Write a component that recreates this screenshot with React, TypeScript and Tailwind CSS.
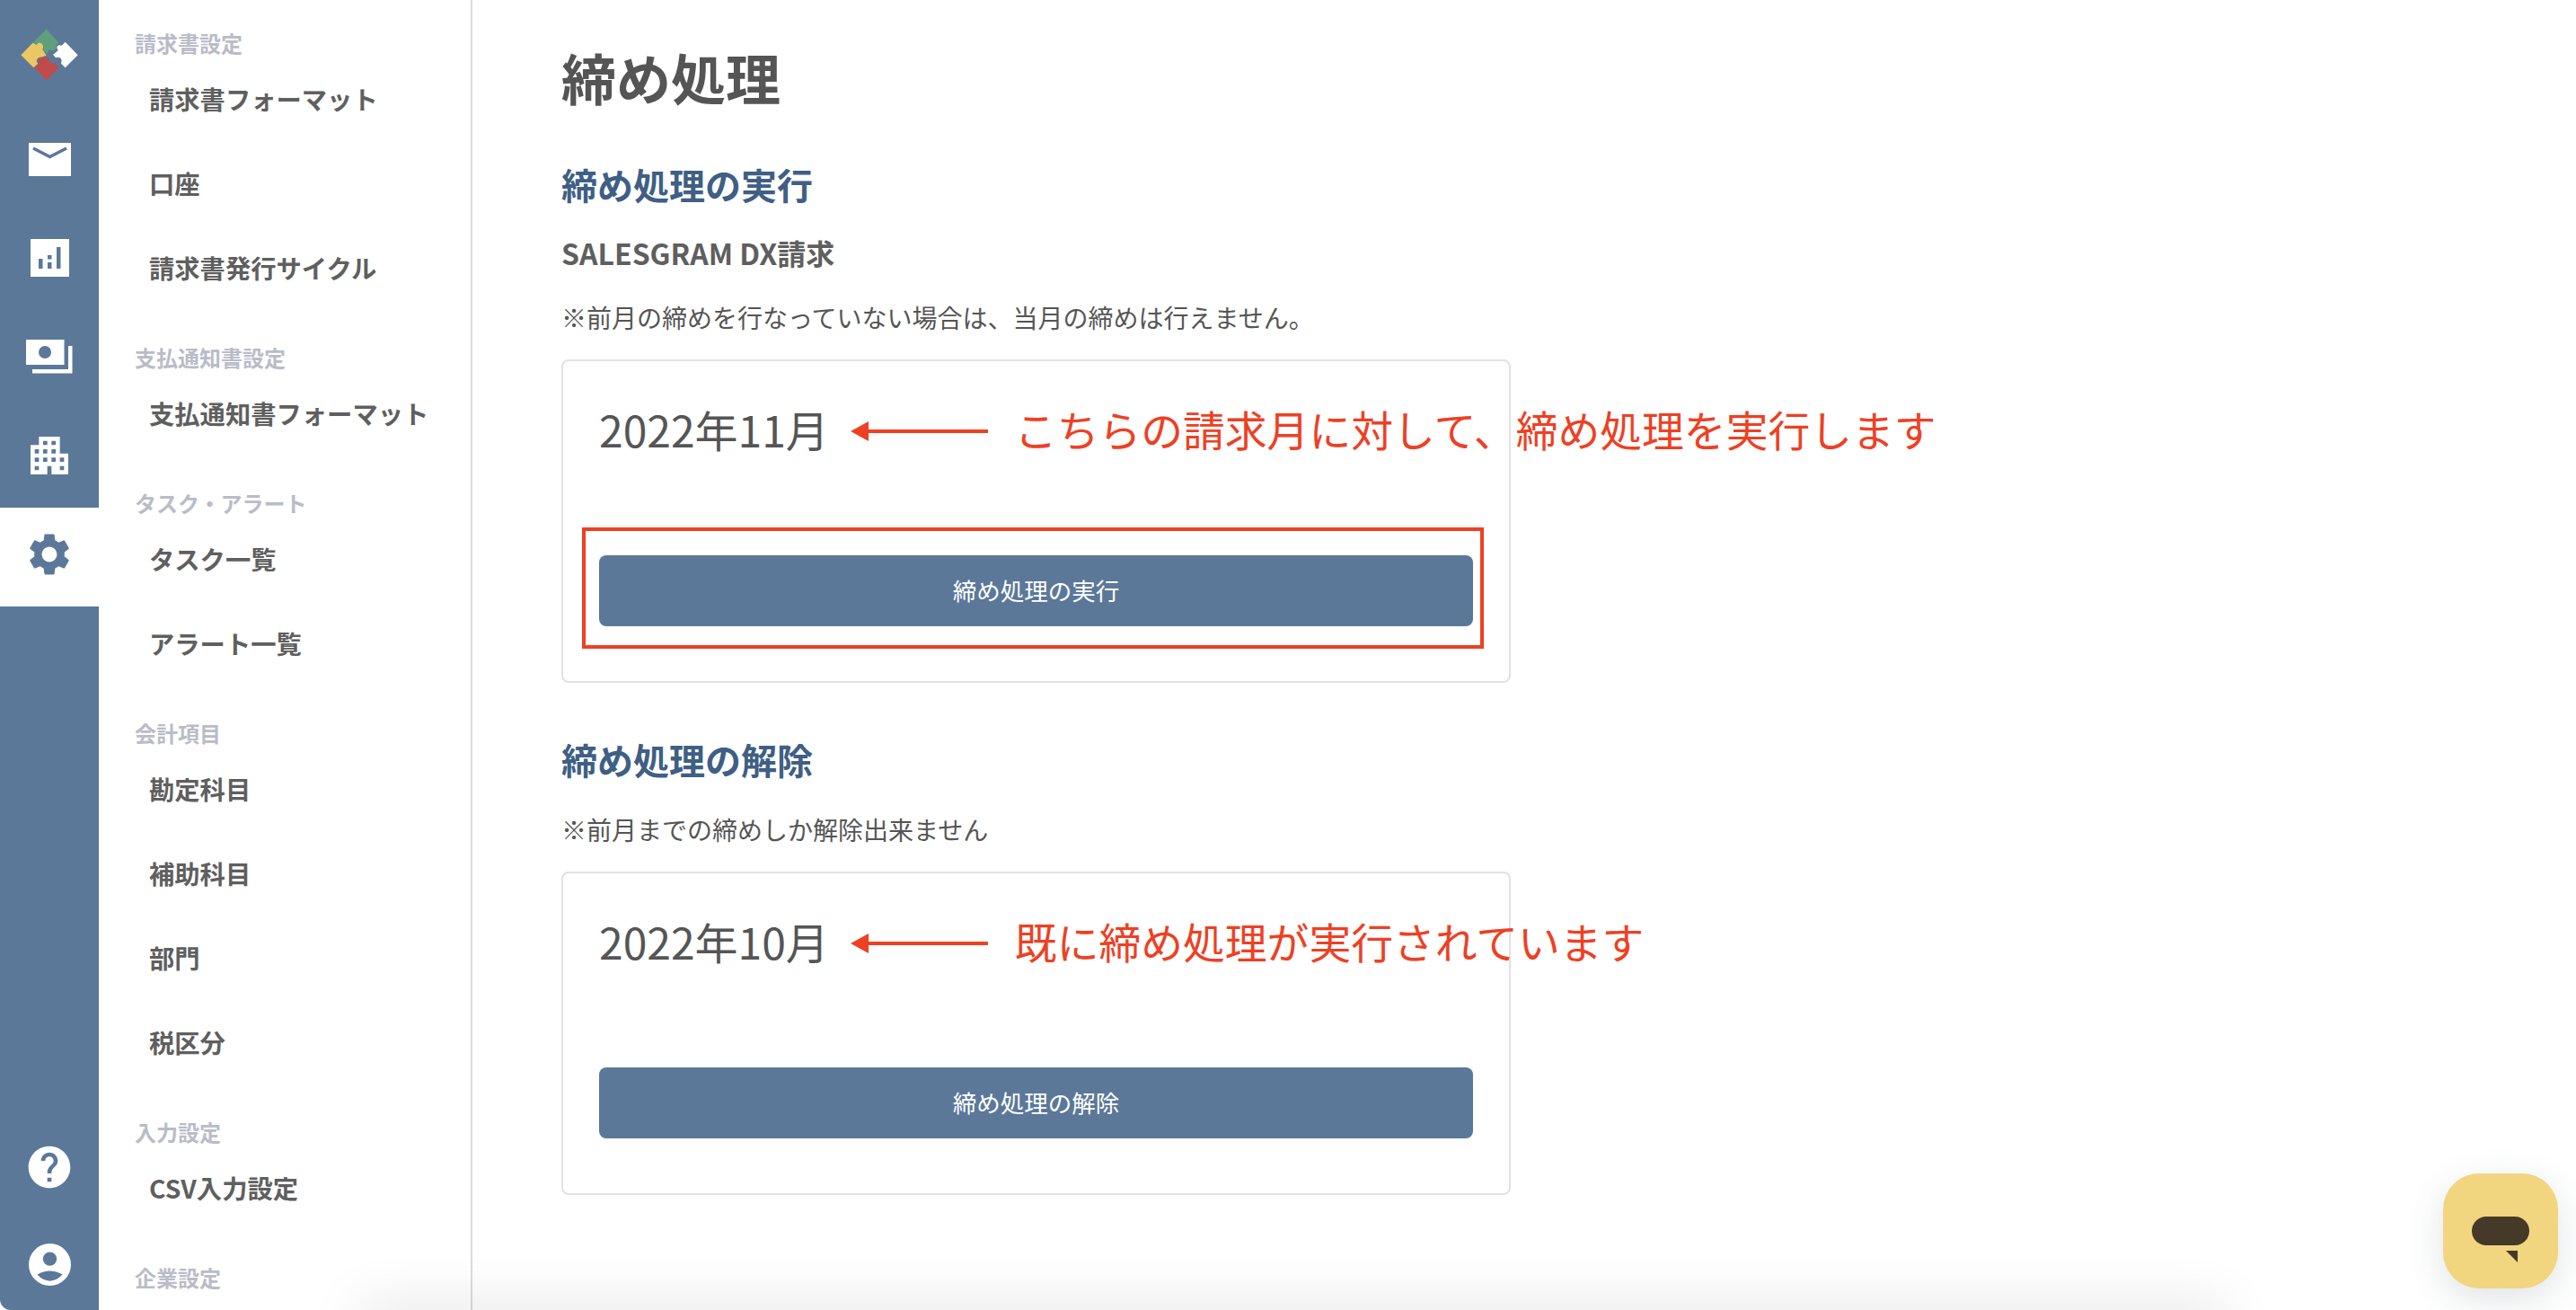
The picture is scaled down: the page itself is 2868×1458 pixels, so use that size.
import { MdSettings, MdHelp } from "react-icons/md";

const jp = "font-['Noto_Sans_CJK_JP','Noto_Sans',sans-serif]";

const sections = [
  { label: "請求書設定", items: ["請求書フォーマット", "口座", "請求書発行サイクル"] },
  { label: "支払通知書設定", items: ["支払通知書フォーマット"] },
  { label: "タスク・アラート", items: ["タスク一覧", "アラート一覧"] },
  { label: "会計項目", items: ["勘定科目", "補助科目", "部門", "税区分"] },
  { label: "入力設定", items: ["CSV入力設定"] },
  { label: "企業設定", items: [] as string[] },
];

const Logo = () => (
  <svg width="70" height="62" viewBox="60 30 210 185">
    <path d="M155 37 L195 80 L188 92 Q190 108 174 108 L164 104 L158 120 L145 105 Q150 90 135 84 L124 92 L112 80 Z" fill="#5f9f7c" />
    <path d="M70 123 L110 82 L122 90 Q128 78 140 86 Q148 94 142 104 L155 125 L140 130 Q122 130 122 146 L127 152 L112 165 Z" fill="#ebc764" />
    <path d="M155 208 L197 165 L182 150 L165 150 Q170 130 148 130 Q126 132 126 148 L130 152 L115 165 Z" fill="#c04b4b" />
    <path d="M260 123 L218 80 L206 92 Q192 86 190 100 L194 108 L177 122 L186 132 Q204 128 206 142 L204 152 L218 165 Z" fill="#fff" />
  </svg>
);

const MailIcon = () => (
  <svg width="47" height="37" viewBox="0 0 47 37">
    <rect width="47" height="37" fill="#fff" />
    <path d="M5 6 L23.5 15.5 L42 6" fill="none" stroke="#5b7899" strokeWidth="3.5" />
  </svg>
);

const ChartIcon = () => (
  <svg width="43" height="42" viewBox="0 0 43 42">
    <rect width="43" height="42" fill="#fff" />
    <path d="M9 22h4.500v11H9zM19 18h4.500v4.500H19zM19 26h4.500v7H19zM29 9h4.500v24H29z" fill="#5b7899" />
  </svg>
);

const MoneyIcon = () => (
  <svg width="52" height="38" viewBox="0 0 52 38">
    <rect width="42.500" height="28" fill="#fff" />
    <circle cx="21" cy="14" r="7" fill="#5b7899" />
    <path d="M7 33 H47 V7 H51.500 V37.500 H7 Z" fill="#fff" />
  </svg>
);

const BuildingIcon = () => (
  <svg width="42" height="42" viewBox="0 0 126 126">
    <path fillRule="evenodd" fill="#fff" d="M28 0H98V56H126V126H70V98H56V126H0V28H28Z
      M42 14h14v14H42z M70 14h14v14H70z
      M14 42h14v14H14z M42 42h14v14H42z M70 42h14v14H70z
      M14 70h14v14H14z M42 70h14v14H42z M70 70h14v14H70z M98 70h14v14H98z
      M14 98h14v14H14z M98 98h14v14H98z" />
  </svg>
);

const UserIcon = () => (
  <svg width="47" height="47" viewBox="0 0 140 140">
    <circle cx="70" cy="70" r="70" fill="#fff" />
    <circle cx="70" cy="51" r="23" fill="#5b7899" />
    <path d="M28 103 Q70 79 112 103 Q92 124 70 124 Q48 124 28 103Z" fill="#5b7899" />
  </svg>
);

const RailRow = ({ children, active }: { children: React.ReactNode; active?: boolean }) => (
  <div className={`flex h-[110px] w-full items-center justify-center ${active ? "bg-white" : ""}`}>{children}</div>
);

const Rail = () => (
  <div className="flex h-full w-[110px] shrink-0 flex-col rounded-bl-[12px] bg-[#5b7899]">
    <div className="flex h-[122px] items-center justify-center">
      <Logo />
    </div>
    <RailRow><MailIcon /></RailRow>
    <RailRow><ChartIcon /></RailRow>
    <RailRow><MoneyIcon /></RailRow>
    <RailRow><BuildingIcon /></RailRow>
    <div className="h-[3px]" />
    <RailRow active><div className="pb-[6px]"><MdSettings className="text-[#5b7899]" size={56} /></div></RailRow>
    <div className="mt-auto flex flex-col items-center gap-[57px] pb-[27px]">
      <MdHelp className="text-white" size={56} />
      <UserIcon />
    </div>
  </div>
);

const SubNav = () => (
  <aside className="h-full w-[416px] shrink-0 overflow-hidden border-r-2 border-[#dcdcdc] bg-white pt-[32px] pl-[40px]">
    {sections.map((s) => (
      <div key={s.label} className="mb-[36px]">
        <div className="h-[32px] text-[24px] leading-[32px] font-bold text-[#b9bcc8]">{s.label}</div>
        {s.items.map((i) => (
          <div key={i} className="flex h-[94px] items-center pb-[2px] pl-4 text-[28.3px] font-bold text-[#5f5f5f]">
            {i}
          </div>
        ))}
      </div>
    ))}
  </aside>
);

const Arrow = () => (
  <svg width="153" height="22" viewBox="0 0 153 22" className="mt-[6px] mr-[30px] ml-[24px] shrink-0">
    <path d="M0 11 L20 0 V9 H153 V13 H20 V22 Z" fill="#ee4023" />
  </svg>
);

const ClosingCard = ({ month, note, action, highlight }: { month: string; note: string; action: string; highlight?: boolean }) => (
  <div className="mt-[27px] w-[1057px] rounded-[8px] border-2 border-[#e2e2e2] pt-[45px] pr-[40px] pb-[61px] pl-[40px]">
    <div className="flex h-[60px] items-center whitespace-nowrap">
      <span className="text-[48px] text-[#555555]">{month}</span>
      <Arrow />
      <span className="text-[46.8px] text-[#ee4023]">{note}</span>
    </div>
    <div className="relative mt-[111px]">
      <button className="flex h-[79px] w-full items-center justify-center rounded-[8px] bg-[#5b7899] pb-[2px] text-[26.5px] text-white">
        {action}
      </button>
      {highlight && (
        <div className="absolute -top-[31px] -right-[12px] -bottom-[25px] -left-[19px] border-4 border-[#ee4023]" />
      )}
    </div>
  </div>
);

const Main = () => (
  <main className="h-full flex-1 overflow-hidden bg-white pl-[99px]">
    <h1 className="mt-[56px] h-[60px] text-[61px] leading-[60px] font-bold text-[#555555]">締め処理</h1>
    <h2 className="mt-[65px] h-[48px] text-[40px] leading-[48px] font-bold text-[#3f5f85]">締め処理の実行</h2>
    <h3 className="mt-[32px] h-[40px] text-[32px] leading-[40px] font-bold text-[#5f5f5f]">SALESGRAM DX請求</h3>
    <p className="mt-[32px] h-[40px] text-[28px] leading-[40px] text-[#555555]">※前月の締めを行なっていない場合は、当月の締めは行えません。</p>
    <ClosingCard month="2022年11月" note="こちらの請求月に対して、締め処理を実行します" action="締め処理の実行" highlight />
    <h2 className="mt-[61px] h-[48px] text-[40px] leading-[48px] font-bold text-[#3f5f85]">締め処理の解除</h2>
    <p className="mt-[34px] h-[40px] text-[28px] leading-[40px] text-[#555555]">※前月までの締めしか解除出来ません</p>
    <ClosingCard month="2022年10月" note="既に締め処理が実行されています" action="締め処理の解除" />
  </main>
);

export default function App() {
  return (
    <div className={`relative flex h-[1458px] w-[2868px] overflow-hidden bg-white ${jp}`}>
      <Rail />
      <SubNav />
      <Main />
      {/* bottom window shadow */}
      <div className="pointer-events-none absolute right-[390px] -bottom-[20px] left-[400px] h-[20px] shadow-[0_0_60px_0_rgba(0,0,0,0.2)]" />
      {/* chat button */}
      <div className="absolute right-[20px] bottom-[24px] flex h-[128px] w-[128px] items-center justify-center rounded-[40px] bg-[#f2d57f] shadow-[0_12px_40px_rgba(60,80,90,0.16)]">
        <div className="relative h-[32px] w-[64px] rounded-full bg-[#443a27]">
          <svg width="14" height="14" viewBox="0 0 14 14" className="absolute top-[38px] left-[38px]">
            <path d="M0 0H13V13Z" fill="#443a27" />
          </svg>
        </div>
      </div>
    </div>
  );
}
